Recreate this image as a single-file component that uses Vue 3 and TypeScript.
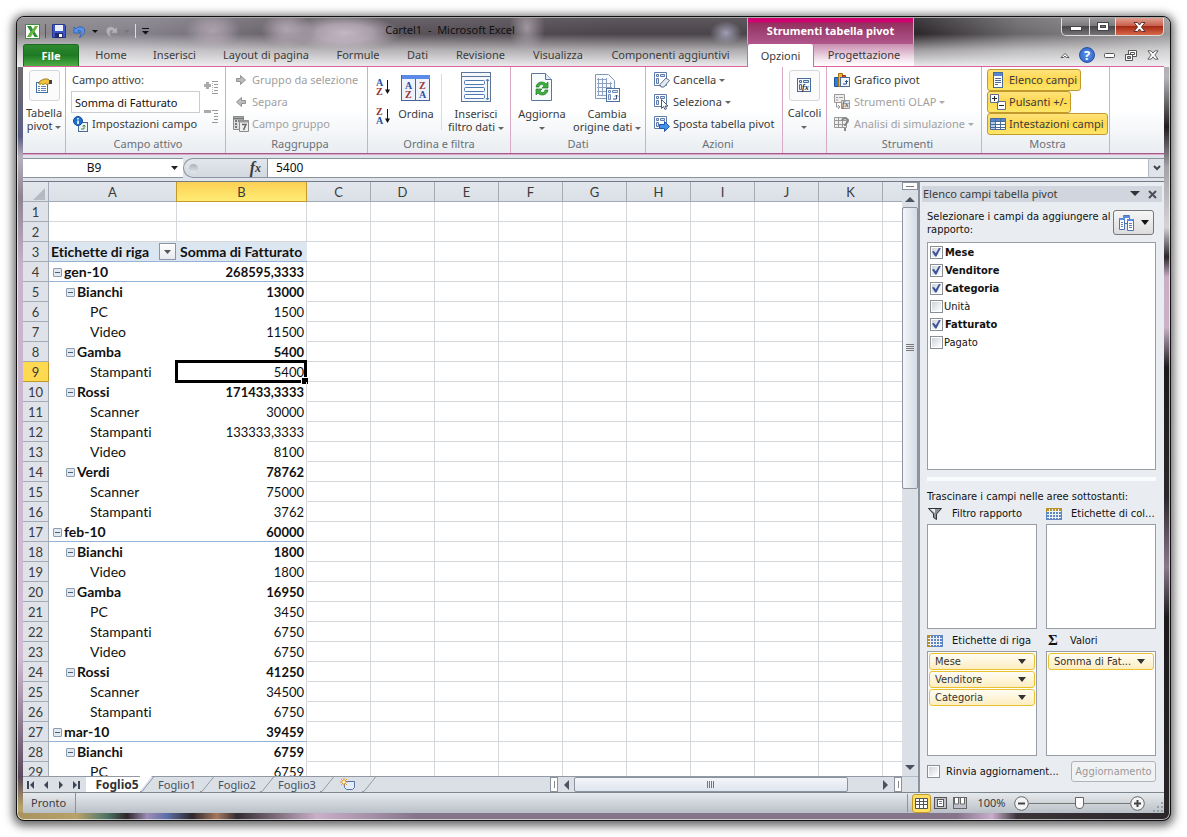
<script setup lang="ts">
import { ref } from 'vue'

interface Tab { name: string; width: number }
interface Row { label: string; value: string; level: number }

const tabs: Tab[] = [
  { name: 'Home', width: 58 },
  { name: 'Inserisci', width: 69 },
  { name: 'Layout di pagina', width: 114 },
  { name: 'Formule', width: 70 },
  { name: 'Dati', width: 49 },
  { name: 'Revisione', width: 77 },
  { name: 'Visualizza', width: 78 },
  { name: 'Componenti aggiuntivi', width: 147 },
]

const columns: string[] = ['A', 'B', 'C', 'D', 'E', 'F', 'G', 'H', 'I', 'J', 'K', '']
const emptyColumns = columns.slice(2)

const rows: Row[] = [
  { label: 'gen-10', value: '268595,3333', level: 0 },
  { label: 'Bianchi', value: '13000', level: 1 },
  { label: 'PC', value: '1500', level: 2 },
  { label: 'Video', value: '11500', level: 2 },
  { label: 'Gamba', value: '5400', level: 1 },
  { label: 'Stampanti', value: '5400', level: 2 },
  { label: 'Rossi', value: '171433,3333', level: 1 },
  { label: 'Scanner', value: '30000', level: 2 },
  { label: 'Stampanti', value: '133333,3333', level: 2 },
  { label: 'Video', value: '8100', level: 2 },
  { label: 'Verdi', value: '78762', level: 1 },
  { label: 'Scanner', value: '75000', level: 2 },
  { label: 'Stampanti', value: '3762', level: 2 },
  { label: 'feb-10', value: '60000', level: 0 },
  { label: 'Bianchi', value: '1800', level: 1 },
  { label: 'Video', value: '1800', level: 2 },
  { label: 'Gamba', value: '16950', level: 1 },
  { label: 'PC', value: '3450', level: 2 },
  { label: 'Stampanti', value: '6750', level: 2 },
  { label: 'Video', value: '6750', level: 2 },
  { label: 'Rossi', value: '41250', level: 1 },
  { label: 'Scanner', value: '34500', level: 2 },
  { label: 'Stampanti', value: '6750', level: 2 },
  { label: 'mar-10', value: '39459', level: 0 },
  { label: 'Bianchi', value: '6759', level: 1 },
  { label: 'PC', value: '6759', level: 2 },
]

const activeRow = ref(9)
const activeField = ref('Somma di Fatturato')
const zoomLevel = ref(50)
const fields = ref([
  { name: 'Mese', on: true },
  { name: 'Venditore', on: true },
  { name: 'Categoria', on: true },
  { name: 'Unità', on: false },
  { name: 'Fatturato', on: true },
  { name: 'Pagato', on: false },
])
const rowLabels = ['Mese', 'Venditore', 'Categoria']
const sheets = ['Foglio1', 'Foglio2', 'Foglio3']
</script>

<template>
  <div class="desktop">
    <div class="window">
      <header class="head">
        <div class="qat">
          <svg width="15" height="15" viewBox="0 0 15 15">
            <rect x=".5" y=".5" width="14" height="14" fill="#fff" stroke="#3c8b3e" />
            <path d="M2 2h4l2 3.500 2-3.500h3L9.500 7.500 13 13H9.500L7.500 9.500 5.500 13H2l3.500-5.500z" fill="#2f8f38" />
            <path d="M10 2h3L6 13H2z" fill="#7ac043" opacity=".75" />
          </svg>
          <i class="bar"></i>
          <button aria-label="Salva">
            <svg width="14" height="14" viewBox="0 0 14 14">
              <path d="M.5.5h12l1 1v12H.5z" fill="#3a55c4" stroke="#26348a" />
              <rect x="3" y="1" width="8" height="6" fill="#eaf0fb" />
              <rect x="3" y="9" width="8" height="5" fill="#1f2a66" />
              <rect x="7" y="10" width="3" height="3" fill="#fff" />
            </svg>
          </button>
          <button class="undo" aria-label="Annulla">
            <svg width="13" height="13" viewBox="0 0 13 13">
              <path d="M1 2v6h6L4.800 5.800C7.500 4 9.800 7 6.500 12.500 13 9.500 13.500 2 7 1.800 5.500 1.800 4 2.600 3 3.900z" fill="#5b93ea" stroke="#2b5db0" stroke-width=".8" />
            </svg>
            <i class="caret dark"></i>
          </button>
          <button class="redo" aria-label="Ripeti">
            <svg width="13" height="13" viewBox="0 0 13 13">
              <path d="M12 2v6H6l2.200-2.200C5.500 4 3.200 7 6.500 12.500 0 9.500-.500 2 6 1.800c1.500 0 3 .800 4 2.100z" fill="#b5b3b7" stroke="#9b999d" stroke-width=".6" />
            </svg>
            <i class="caret"></i>
          </button>
          <i class="bar light"></i>
          <button aria-label="Personalizza barra di accesso rapido">
            <svg width="7" height="8" viewBox="0 0 7 8"><path d="M0 1.500h7" stroke="#111" /><path d="M0 4h7L3.500 7.500z" fill="#111" /></svg>
          </button>
          <span class="doc">Cartel1&nbsp; -&nbsp; Microsoft Excel</span>
        </div>
        <div class="ctx-title">Strumenti tabella pivot</div>
        <div class="sys">
          <button class="min" aria-label="Riduci a icona"><svg width="12" height="5"><rect x=".5" y=".5" width="11" height="4" fill="#fff" stroke="#444" /></svg></button>
          <button class="max" aria-label="Ingrandisci"><svg width="12" height="9"><rect x=".5" y=".5" width="11" height="8" fill="#fff" stroke="#444" /><rect x="3.500" y="3.500" width="5" height="2" fill="#777" stroke="#444" /></svg></button>
          <button class="close" aria-label="Chiudi"><svg width="13" height="10" viewBox="0 0 13 10"><path d="M1 .500h3.500l2 2.500 2-2.500H12L8.500 5l3.500 4.500H8.500l-2-2.500-2 2.500H1L4.500 5z" fill="#fff" stroke="#5d3030" /></svg></button>
        </div>
        <nav class="tabs">
          <button class="file">File</button>
          <button v-for="t in tabs" :key="t.name" :style="{ width: t.width + 'px' }">{{ t.name }}</button>
        </nav>
        <nav class="ctx-tabs">
          <button class="current">Opzioni</button>
          <button>Progettazione</button>
        </nav>
        <div class="mdi">
          <button aria-label="Riduci barra multifunzione"><svg width="10" height="7"><path d="M1 5.500 5 1.500l4 4H6.500L5 4.200 3.500 5.500z" fill="#fff" stroke="#555" /></svg></button>
          <button class="help" aria-label="Guida">?</button>
          <button aria-label="Riduci"><svg width="11" height="5"><rect x=".5" y=".5" width="10" height="4" rx="1" fill="#fff" stroke="#555" /></svg></button>
          <button aria-label="Ripristina"><svg width="12" height="11"><path d="M3.500.500h8v6h-8z" fill="#fff" stroke="#555" /><path d="M5.500 2.500h4v2h-4z" fill="none" stroke="#555" /><path d="M.500 4.500h7v6h-7z" fill="#fff" stroke="#555" /><path d="M2.500 6.500h3v2h-3z" fill="#aaa" stroke="#555" /></svg></button>
          <button aria-label="Chiudi cartella"><svg width="12" height="10" viewBox="0 0 13 10"><path d="M1 .500h3.500l2 2.500 2-2.500H12L8.500 5l3.500 4.500H8.500l-2-2.500-2 2.500H1L4.500 5z" fill="#fff" stroke="#555" /></svg></button>
        </div>
      </header>

      <section class="ribbon">
        <div class="group g-pivot">
          <button class="tall">
            <span class="frame">
              <svg width="16" height="15" viewBox="0 0 16 15">
                <rect x=".5" y="4.500" width="11" height="10" fill="#fff" stroke="#3d6ea5" />
                <path d="M2 8.500h2M5 8.500h5M2 10.500h2M5 10.500h5M2 12.500h2M5 12.500h5" stroke="#5f86b8" />
                <path d="M2.500 5.500 4 3l4-2h4l1.500 1.500v3L11 6.500 9 5.500 7 7 5.500 5.500 4 6.500z" fill="#f0c33c" stroke="#8a6a18" stroke-width=".8" />
                <path d="M13 2h3v4h-3z" fill="#444" />
              </svg>
            </span>
            <span>Tabella<br>pivot <i class="caret"></i></span>
          </button>
        </div>

        <div class="group g-field">
          <div class="cols">
            <div class="stack">
              <label class="item lab" for="active-field">Campo attivo:</label>
              <input id="active-field" v-model="activeField" class="field">
              <button class="item info">
                <svg width="16" height="16" viewBox="0 0 16 16">
                  <rect x="5.500" y="6.500" width="9" height="9" fill="#eef4fb" stroke="#4a6b96" />
                  <path d="M8 13h3V9m-1.500 1.500L11 9l1.500 1.500" fill="none" stroke="#3c8e34" />
                  <circle cx="5" cy="5" r="4.500" fill="#1f6fd0" stroke="#134a95" /><path d="M4.200 2h1.600v1.500H4.200zM4.200 4.500h1.600V8H4.200z" fill="#fff" />
                </svg>
                Impostazioni campo
              </button>
            </div>
            <div class="expand">
              <button disabled aria-label="Espandi intero campo"><svg width="16" height="14" viewBox="0 0 16 14"><path d="M3 2h3v2h2v3H6v2H3V7H1V4h2z" fill="#aaa" /><path d="M9 1.500h6M11 4.500h4M11 7.500h4M11 10.500h4M9 13.500h6" stroke="#999" /><path d="M9.500 3v9" stroke="#bbb" stroke-dasharray="1 1" /></svg></button>
              <button disabled aria-label="Comprimi intero campo"><svg width="16" height="14" viewBox="0 0 16 14"><path d="M1 1h7v3H1z" fill="#aaa" /><path d="M9 1.500h6M11 4.500h4M11 7.500h4M11 10.500h4M9 13.500h6" stroke="#999" /></svg></button>
            </div>
          </div>
          <h2>Campo attivo</h2>
        </div>

        <div class="group g-group">
          <div class="stack">
            <button class="item" disabled><svg width="16" height="12" viewBox="0 0 16 12"><path d="M3.500 4.500h4v-3l5 4.500-5 4.500v-3h-4z" fill="#bbb" stroke="#929292" /></svg>Gruppo da selezione</button>
            <button class="item" disabled><svg width="16" height="12" viewBox="0 0 16 12"><path d="M12.500 4.500h-4v-3L3.500 6l5 4.500v-3h4z" fill="#bbb" stroke="#929292" /></svg>Separa</button>
            <button class="item" disabled><svg width="16" height="16" viewBox="0 0 16 16"><path d="M.500.500h10v13H.500z" fill="#ddd" stroke="#8a8a8a" /><path d="M.500 2.500h10M2 5h2M2 8h2M2 11h2M5 5h1" stroke="#777" stroke-width="2" /><path d="M6.500 4.500h9v11h-9z" fill="#eee" stroke="#8a8a8a" /><path d="M6.500 5.500h9" stroke="#999" stroke-width="2" /><path d="M9 8.500h4L10.500 14" fill="none" stroke="#666" stroke-width="1.500" /></svg>Campo gruppo</button>
          </div>
          <h2>Raggruppa</h2>
        </div>

        <div class="group g-sort">
          <div class="cols">
            <div class="sorts">
              <button aria-label="Ordina dalla A alla Z"><svg width="17" height="18" viewBox="0 0 17 18"><text class="az" x="1" y="8" fill="#2c4f9e">A</text><text class="az" x="1" y="17" fill="#963232">Z</text><path d="M12.500 2v11" stroke="#111" /><path d="M10 11.500h5L12.500 16z" fill="#111" /></svg></button>
              <button aria-label="Ordina dalla Z alla A"><svg width="17" height="18" viewBox="0 0 17 18"><text class="az" x="1" y="8" fill="#963232">Z</text><text class="az" x="1" y="17" fill="#2c4f9e">A</text><path d="M12.500 2v11" stroke="#111" /><path d="M10 11.500h5L12.500 16z" fill="#111" /></svg></button>
            </div>
            <button class="big order">
              <svg width="30" height="30" viewBox="0 0 30 30"><rect x=".5" y="3.500" width="28" height="25" fill="#eef3fb" stroke="#48659b" /><rect x="1" y="3" width="28" height="4" fill="#5b8be6" /><path d="M14.500 7v21" stroke="#48659b" /><text class="az" x="4" y="17" fill="#2c4f9e">A</text><text class="az" x="4" y="26" fill="#963232">Z</text><text class="az" x="18" y="17" fill="#963232">Z</text><text class="az" x="18" y="26" fill="#2c4f9e">A</text></svg>
              <span>Ordina</span>
            </button>
            <i class="thin"></i>
            <button class="big filter">
              <svg width="30" height="30" viewBox="0 0 30 30"><rect x=".5" y=".5" width="29" height="29" fill="#f4f8fc" stroke="#5c7699" /><path d="M1 4.500h28" stroke="#5c7699" /><g fill="#fff" stroke="#4f79b5"><rect x="3.500" y="8.500" width="20" height="4" rx="1" /><rect x="3.500" y="15.500" width="20" height="4" rx="1" /><rect x="3.500" y="22.500" width="20" height="4" rx="1" /></g><path d="M26.500 8v19M25 9l1.500-2L28 9M25 26l1.500 2 1.500-2" fill="none" stroke="#4f79b5" /></svg>
              <span>Inserisci<br>filtro dati <i class="caret"></i></span>
            </button>
          </div>
          <h2>Ordina e filtra</h2>
        </div>

        <div class="group g-data">
          <div class="cols">
            <button class="big refresh">
              <svg width="24" height="30" viewBox="0 0 24 30"><path d="M1.500 1.500h14l6 6v21h-20z" fill="#f7fafe" stroke="#5c7699" /><path d="M15.500 1.500v6h6" fill="#dfe9f5" stroke="#5c7699" /><path d="M6 15c1-6 8-6 10-3l2-2v6h-6l2-2c-1-2-5-2-5 1z" fill="#3fae3d" stroke="#1e7a25" stroke-width=".7" /><path d="M18 18c-1 6-8 6-10 3l-2 2v-6h6l-2 2c1 2 5 2 5-1z" fill="#3fae3d" stroke="#1e7a25" stroke-width=".7" /></svg>
              <span>Aggiorna<br><i class="caret"></i></span>
            </button>
            <button class="big source">
              <svg width="28" height="30" viewBox="0 0 28 30"><path d="M2.500 2.500h13l6 6v18h-19z" fill="#f7fafe" stroke="#8198b5" /><path d="M5.500 6v17.500M9.500 6v17.500M13.500 6v17.500M17.500 10v13.500M4 7.500h10M4 11.500h15M4 15.500h15M4 19.500h15M4 23.500h15" stroke="#8fa3c0" /><rect x="13.500" y="16.500" width="13" height="13" fill="#fff" stroke="#4f6f9e" /><path d="M15.500 18.500h2v2h-2zM19.500 18.500h5v2h-5zM15.500 22.500h2v5h-2z" fill="#dce8f6" stroke="#6f8db8" /><path d="M20 27h3.500v-4m-1.500 1.500 1.500-1.500 1.500 1.500" fill="none" stroke="#2e4f86" /></svg>
              <span>Cambia<br>origine dati <i class="caret"></i></span>
            </button>
          </div>
          <h2>Dati</h2>
        </div>

        <div class="group g-actions">
          <div class="stack">
            <button class="item"><svg width="16" height="16" viewBox="0 0 16 16"><path d="M.500.500h12v13H.500z" fill="#fff" stroke="#5d7ba8" /><path d="M2.500 2.500h2v2h-2zM6.500 2.500h4v2h-4zM2.500 6.500h2v5h-2z" fill="#dce8f6" stroke="#5d7ba8" /><path d="M6 12.500 12 6l3.500 2.500-5.500 6.500H7z" fill="#e5eaf1" stroke="#5a6f8f" /></svg>Cancella <i class="caret"></i></button>
            <button class="item"><svg width="16" height="16" viewBox="0 0 16 16"><path d="M.500.500h12v12H.500z" fill="#fff" stroke="#5d7ba8" /><path d="M2.500 2.500h2v2h-2zM6.500 2.500h4v2h-4zM2.500 6.500h2v4h-2z" fill="#dce8f6" stroke="#5d7ba8" /><path d="M7.500 5.500v9l2-2 1.500 3 1.500-.800-1.400-2.700h2.900z" fill="#fff" stroke="#4a5c78" /></svg>Seleziona <i class="caret"></i></button>
            <button class="item"><svg width="16" height="16" viewBox="0 0 16 16"><path d="M.500.500h12v12H.500z" fill="#fff" stroke="#5d7ba8" /><path d="M2.500 2.500h2v2h-2zM6.500 2.500h4v2h-4zM2.500 6.500h2v4h-2z" fill="#dce8f6" stroke="#5d7ba8" /><path d="M5.500 8.500h5v-3l5 5-5 5v-3h-5z" fill="#4590ea" stroke="#1e58b0" /></svg>Sposta tabella pivot</button>
          </div>
          <h2>Azioni</h2>
        </div>

        <div class="group g-calc">
          <button class="tall">
            <span class="frame"><svg width="15" height="15" viewBox="0 0 15 15"><rect x=".5" y=".5" width="13" height="13" fill="#f4f8fd" stroke="#4a6b96" /><path d="M2.500 2.500h2v2h-2zM6.500 2.500h5v2h-5zM2.500 6.500h2v5h-2z" fill="#dce8f6" stroke="#4a6b96" /><text class="fx" x="5" y="12" fill="#223">fx</text></svg></span>
            <span>Calcoli<br><i class="caret"></i></span>
          </button>
        </div>

        <div class="group g-tools">
          <div class="stack">
            <button class="item"><svg width="17" height="16" viewBox="0 0 17 16"><path d="M.500 5.500h4v9h-4z" fill="#2f7fd6" stroke="#1c549b" /><path d="M4.500 1.500h4v13h-4z" fill="#f2b632" stroke="#a7700f" /><path d="M8.500 3.500h3v10h-3z" fill="#d9542b" stroke="#96330f" /><rect x="6.500" y="5.500" width="9" height="9" fill="#f2f6fc" stroke="#4a6b96" /><path d="M9 12h3.500V8.500M11 10l1.500-1.500L14 10" fill="none" stroke="#2e4f86" /></svg>Grafico pivot</button>
            <button class="item" disabled><svg width="17" height="16" viewBox="0 0 17 16"><path d="M.500.500h10v8H.500z" fill="#eee" stroke="#999" /><path d="M2 3.500h2M5 3.500h4M2 6h2" stroke="#999" /><path d="M2.500 9v4h3M4 11l2 2-2 2" fill="none" stroke="#999" /><path d="M7.500 6.500h8v8h-8z" fill="#e3e3e3" stroke="#999" /><text class="fx" x="8" y="13" fill="#666">fx</text></svg>Strumenti OLAP <i class="caret"></i></button>
            <button class="item" disabled><svg width="17" height="16" viewBox="0 0 17 16"><path d="M.500 1.500h12v10H.500zM.500 4.500h12M.500 8.500h12M4.500 1.500v10M8.500 1.500v10" fill="#eee" stroke="#999" /><path d="M8 5c0-4 7-3 6 0 0 2-3 2-3 5M11 12v3" fill="none" stroke="#888" stroke-width="2" /></svg>Analisi di simulazione <i class="caret"></i></button>
          </div>
          <h2>Strumenti</h2>
        </div>

        <div class="group g-show">
          <div class="stack toggles">
            <button class="item on"><svg width="16" height="16" viewBox="0 0 16 16"><rect x="3.500" y=".5" width="9" height="15" fill="#fff" stroke="#4a6b96" /><rect x="4" y="1" width="8" height="3" fill="#5487cf" /><path d="M5 6.500h6M5 8.500h6M5 10.500h6M5 12.500h3" stroke="#4a6b96" /></svg>Elenco campi</button>
            <button class="item on"><svg width="16" height="16" viewBox="0 0 16 16"><path d="M.500.500h8v8h-8zM7.500 7.500h8v8h-8z" fill="#fff" stroke="#5d6f8d" /><path d="M2 4.500h5M4.500 2v5M9 11.500h5" stroke="#223" /></svg>Pulsanti +/-</button>
            <button class="item on"><svg width="16" height="16" viewBox="0 0 16 16"><path d="M.500 2.500h15v11H.500z" fill="#fff" stroke="#4a6b96" /><rect x="1" y="3" width="14" height="2" fill="#5487cf" /><rect x="1" y="5" width="4" height="8" fill="#b4cdec" /><path d="M5.500 3v10M10.500 3v10M1 5.500h14M1 8.500h14M1 11.500h14" stroke="#4a6b96" /></svg>Intestazioni campi</button>
          </div>
          <h2>Mostra</h2>
        </div>
      </section>

      <div class="formula">
        <input class="name" value="B9" aria-label="Casella nome">
        <button class="drop" aria-label="Elenco nomi"><svg width="7" height="4"><path d="M0 0h7L3.500 4z" fill="#222" /></svg></button>
        <div class="fxbox"><i class="knob"></i><button aria-label="Inserisci funzione"><em>f</em><em class="x">x</em></button></div>
        <input class="expr" value="5400" aria-label="Barra della formula">
        <button class="more" aria-label="Espandi barra della formula"><svg width="8" height="6"><path d="m1 1 3 3 3-3" fill="none" stroke="#444" stroke-width="2" /></svg></button>
      </div>

      <main class="work">
        <div class="sheet">
          <div class="grid">
            <table>
              <colgroup>
                <col class="c-head"><col class="c-a"><col class="c-b"><col v-for="c in emptyColumns" :key="c" class="c-n">
              </colgroup>
              <thead>
                <tr>
                  <th class="corner"><svg width="12" height="12"><path d="M12 0v12H0z" fill="#b4bac3" /></svg></th>
                  <th v-for="c in columns" :key="c" :class="{ hot: c === 'B' }">{{ c }}</th>
                </tr>
              </thead>
              <tbody>
                <tr v-for="n in 2" :key="n"><th>{{ n }}</th><td v-for="c in columns" :key="c"></td></tr>
                <tr class="titles">
                  <th>3</th>
                  <td><span class="with-drop">Etichette di riga<button aria-label="Filtra etichette di riga"><svg width="7" height="4"><path d="M0 0h7L3.500 4z" fill="#555" /></svg></button></span></td>
                  <td>Somma di Fatturato</td>
                  <td v-for="c in emptyColumns" :key="c"></td>
                </tr>
                <tr v-for="(r, i) in rows" :key="i" :class="'lv' + r.level">
                  <th :class="{ hot: i + 4 === activeRow }">{{ i + 4 }}</th>
                  <td class="lbl"><button v-if="r.level < 2" class="fold" aria-label="Comprimi"></button>{{ r.label }}</td>
                  <td class="num">{{ r.value }}<i v-if="i + 4 === activeRow" class="cursor"></i></td>
                  <td v-for="c in emptyColumns" :key="c"></td>
                </tr>
              </tbody>
            </table>
          </div>
          <div class="bottom">
            <div class="sheet-tabs">
              <button class="nav" aria-label="Primo foglio"><svg width="8" height="8"><path d="M1 0v8" stroke="#3c4654" stroke-width="2" /><path d="M7 0v8L3 4z" fill="#3c4654" /></svg></button>
              <button class="nav" aria-label="Foglio precedente"><svg width="8" height="8"><path d="M6 0v8L2 4z" fill="#3c4654" /></svg></button>
              <button class="nav" aria-label="Foglio successivo"><svg width="8" height="8"><path d="M2 0v8l4-4z" fill="#3c4654" /></svg></button>
              <button class="nav" aria-label="Ultimo foglio"><svg width="8" height="8"><path d="M1 0v8l4-4z" fill="#3c4654" /><path d="M7 0v8" stroke="#3c4654" stroke-width="2" /></svg></button>
              <button class="leaf front">Foglio5</button>
              <svg class="slant" width="14" height="16"><path d="M0 0h12L0 15z" fill="#fff" /><path d="M0 15.500h2l12-15" fill="none" stroke="#9299a5" /></svg>
              <template v-for="s in sheets" :key="s">
                <button class="leaf">{{ s }}</button>
                <svg class="slant" width="14" height="16"><path d="M0 15.500h2l12-15" fill="none" stroke="#9299a5" /></svg>
              </template>
              <button class="leaf new" aria-label="Inserisci foglio di lavoro"><svg width="16" height="13" viewBox="0 0 16 13"><path d="M4.500 3.500h10v6l-2 2h-6l-2-2z" fill="#e4ecf9" stroke="#5672a8" /><path d="M4 0v8M0 4h8M1 1l6 6M7 1 1 7" stroke="#e8952a" /><circle cx="4" cy="4" r="1.500" fill="#fff3b0" /></svg></button>
              <svg class="slant" width="14" height="16"><path d="M0 15.500h2l12-15" fill="none" stroke="#9299a5" /></svg>
            </div>
            <div class="hscroll">
              <i class="split"></i>
              <button aria-label="Scorri a sinistra"><svg width="6" height="10"><path d="M6 0v10L1 5z" fill="#4b5360" /></svg></button>
              <div class="htrack"><i class="hthumb"></i></div>
              <button aria-label="Scorri a destra"><svg width="6" height="10"><path d="M0 0v10l5-5z" fill="#4b5360" /></svg></button>
              <i class="split"></i>
            </div>
          </div>
        </div>
        <div class="vscroll">
          <i class="vsplit"></i>
          <button aria-label="Scorri in alto"><svg width="10" height="6"><path d="M0 6h10L5 1z" fill="#4b5360" /></svg></button>
          <div class="vtrack"><i class="vthumb"></i></div>
          <button aria-label="Scorri in basso"><svg width="10" height="6"><path d="M0 0h10L5 5z" fill="#4b5360" /></svg></button>
          <i class="vend"></i>
        </div>

        <aside class="pane">
          <h3>Elenco campi tabella pivot
            <span>
              <button aria-label="Opzioni riquadro"><svg width="10" height="6"><path d="M0 0h10L5 5z" fill="#333" /></svg></button>
              <button aria-label="Chiudi riquadro"><svg width="9" height="9"><path d="m1 1 7 7M8 1 1 8" stroke="#4a4f58" stroke-width="2" /></svg></button>
            </span>
          </h3>
          <div class="pbody">
            <div class="intro">
              <p>Selezionare i campi da aggiungere al rapporto:</p>
              <button class="layout" aria-label="Disposizione"><svg width="16" height="16" viewBox="0 0 16 16"><g fill="#fff" stroke="#4f74b3"><path d="M4.500.500h6v8h-6z" /><path d="M.500 3.500h5v11h-5zM8.500 4.500h6v11h-6z" /></g><path d="M4 1h7v2H4zM0 3h6v2H0zM8 4h7v2H8z" fill="#5a8be0" /><path d="M2 7.500h2M2 9.500h2M2 11.500h2M10 8.500h3M10 10.500h3M10 12.500h3" stroke="#5f7fb4" /></svg><svg width="8" height="5"><path d="M0 0h8L4 5z" fill="#111" /></svg></button>
            </div>
            <div class="list">
              <label v-for="f in fields" :key="f.name" :class="{ bold: f.on }"><input v-model="f.on" type="checkbox">{{ f.name }}</label>
            </div>
            <hr>
            <p class="drag">Trascinare i campi nelle aree sottostanti:</p>
            <div class="areas">
              <section>
                <h4><svg width="17" height="14" viewBox="0 0 17 14"><path d="M1.500 1.500h13L9.500 7v5.500l-3-2V7z" fill="#8d9298" stroke="#333" /><path d="M3 2h5v4z" fill="#eee" /></svg>Filtro rapporto</h4>
                <div class="drop-area"></div>
              </section>
              <section>
                <h4><svg width="17" height="14" viewBox="0 0 17 14"><rect x="0" y="1" width="16" height="12" fill="#5f86c0" /><rect x="0" y="1" width="16" height="4" fill="#b8912c" /><path d="M1 4.500h14M1 7.500h14M1 10.500h14M3.500 2v10M6.500 2v10M9.500 2v10M12.500 2v10" stroke="#eef3fa" /></svg>Etichette di col...</h4>
                <div class="drop-area"></div>
              </section>
              <section>
                <h4><svg width="17" height="14" viewBox="0 0 17 14"><rect x="0" y="1" width="16" height="12" fill="#5f86c0" /><rect x="0" y="1" width="4" height="12" fill="#b8912c" /><path d="M1 4.500h14M1 7.500h14M1 10.500h14M3.500 2v10M6.500 2v10M9.500 2v10M12.500 2v10" stroke="#eef3fa" /></svg>Etichette di riga</h4>
                <div class="drop-area"><button v-for="l in rowLabels" :key="l">{{ l }}<svg width="8" height="5"><path d="M0 0h8L4 5z" fill="#333" /></svg></button></div>
              </section>
              <section>
                <h4><b>Σ</b>Valori</h4>
                <div class="drop-area"><button>Somma di Fat...<svg width="8" height="5"><path d="M0 0h8L4 5z" fill="#333" /></svg></button></div>
              </section>
            </div>
            <div class="update">
              <label><input type="checkbox">Rinvia aggiornament...</label>
              <button disabled>Aggiornamento</button>
            </div>
          </div>
        </aside>
      </main>

      <footer class="status">
        <span class="ready">Pronto</span>
        <i class="fill"></i>
        <button class="view on" aria-label="Normale"><svg width="13" height="11"><path d="M.500.500h12v10H.500zM.500 3.500h12M.500 6.500h12M4.500.500v10M8.500.500v10" fill="#fff" stroke="#555" /></svg></button>
        <button class="view" aria-label="Layout di pagina"><svg width="13" height="12"><rect x=".5" y=".5" width="12" height="11" fill="#bfc3c9" stroke="#555" /><rect x="3.500" y="2.500" width="6" height="7" fill="#fff" stroke="#555" /><path d="M5 4.500h3M5 6.500h3" stroke="#777" /></svg></button>
        <button class="view" aria-label="Anteprima interruzioni"><svg width="14" height="12"><rect x=".5" y=".5" width="13" height="11" fill="#bfc3c9" stroke="#666" /><path d="M1.500 1v6h4V1M7.500 1v6h4V1" fill="#fff" stroke="#666" /></svg></button>
        <span class="pct">100%</span>
        <button class="round" aria-label="Zoom indietro"><svg width="15" height="15"><circle cx="7.500" cy="7.500" r="6.800" fill="#f3f4f6" stroke="#666" /><path d="M4 7.500h7" stroke="#444" stroke-width="2" /></svg></button>
        <input v-model="zoomLevel" type="range" min="0" max="100" aria-label="Zoom">
        <button class="round" aria-label="Zoom avanti"><svg width="15" height="15"><circle cx="7.500" cy="7.500" r="6.800" fill="#f3f4f6" stroke="#666" /><path d="M4 7.500h7M7.500 4v7" stroke="#444" stroke-width="2" /></svg></button>
        <svg class="grip" width="12" height="12"><path d="M9 1h2v2H9zM9 5h2v2H9zM9 9h2v2H9zM5 5h2v2H5zM5 9h2v2H5zM1 9h2v2H1z" fill="#9a9fa7" /></svg>
      </footer>
    </div>
  </div>
</template>

<style>
body { margin: 0; background: #fff; }
</style>

<style scoped>
* { box-sizing: border-box; }
button, input { font: inherit; color: inherit; margin: 0; padding: 0; border: 0; background: none; border-radius: 0; outline: 0; }
button { display: flex; align-items: center; justify-content: center; white-space: nowrap; flex: none; }
svg { flex: none; display: block; }
h2, h3, h4, p { margin: 0; font-weight: 400; font-size: 11px; }

.desktop {
  height: 100vh;
  min-height: 600px;
  padding: 16px;
  font: 11px/14px "Noto Sans", "Open Sans", sans-serif;
  color: #3b3b3b;
  display: flex;
}
.window {
  flex: 1;
  min-width: 0;
  display: flex;
  flex-direction: column;
  padding: 0 6px 7px;
  border: 1px solid #111;
  border-radius: 8px;
  overflow: hidden;
  background:
    linear-gradient(90deg, #a8935f 0, #b7a26c 60px, #4d7466 90px, #2c2529 110px, #9d8cb4 130px, #5d6fa8 150px, #2c2529 175px, #a5795f 200px, #332b30 220px, #c9b0c8 300px, #85758a 400px, #85758a 940px, #c8aecb 975px, #3a3338 1000px, #2a262a 100%) bottom / 100% 8px no-repeat,
    linear-gradient(180deg, #6c686c 0, #6c686c 60px, #5b5f86 120px, #b9b0bd 140px, #8c8490 180px, #c9b3cc 250px, #d2bbd3 640px, #5a4a5c 760px, #b7a26c 790px) left / 8px 100% no-repeat,
    linear-gradient(180deg, #8a868a 0, #b9b6bb 60px, #1f1b1f 110px, #a6a3a8 150px, #d6d3d8 210px, #2a252a 240px, #c9adc5 260px, #cbb2c8 310px, #1d1a1e 350px, #2b272b 480px, #8a7a8c 550px, #1d1a1e 600px, #2a262a 100%) right / 8px 100% no-repeat,
    #6c686c;
  box-shadow: inset 0 0 0 1px rgba(255, 255, 255, .65), 0 2px 10px 3px rgba(0, 0, 0, .6);
}

.caret {
  display: inline-block;
  flex: none;
  width: 0;
  height: 0;
  border: 3px solid transparent;
  border-top-color: #666;
  border-bottom: 0;
  vertical-align: middle;
}
.caret.dark { border-top-color: #111; }

/* title bar and tabs */
.head {
  display: grid;
  grid-template: 26px 23px / auto 167px 1fr;
  margin: 0 -6px;
  padding: 0 6px;
  flex: none;
  background:
    radial-gradient(ellipse 28px 18px at 196px 13px, rgba(205, 190, 206, .6), rgba(205, 190, 206, .4) 45%, transparent),
    radial-gradient(ellipse 26px 18px at 270px 12px, rgba(205, 190, 206, .7), rgba(205, 190, 206, .5) 40%, transparent),
    radial-gradient(ellipse 56px 18px at 328px 15px, rgba(215, 200, 216, .85), rgba(215, 200, 216, .6) 50%, transparent),
    radial-gradient(ellipse 18px 26px at 510px 10px, rgba(190, 180, 190, .7), transparent),
    radial-gradient(ellipse 16px 12px at 709px 15px, rgba(180, 180, 205, .8), transparent),
    linear-gradient(180deg, rgba(255, 255, 255, .1), transparent 16px, rgba(255, 255, 255, .55) 32px, #f2f1f3 50px),
    linear-gradient(90deg, #8b888b 0, #85818a 120px, #6a646b 260px, #5a545a 370px, #4b454b 600px, #4a454a 730px, #2b272b 900px, #6b686b 1000px, #9a989b 100%);
  border-top: 1px solid #aaa;
}
.qat { display: flex; align-items: center; padding-left: 2px; gap: 4px; }
.qat button { gap: 4px; }
.qat > button { margin-left: 3px; }
.undo .caret, .redo .caret { margin-left: 2px; }
.bar { width: 1px; height: 14px; background: #555; margin-left: 1px; }
.bar.light { background: #ddd; }
.qat > .bar + button { margin-left: 2px; }
.redo .caret { border-top-color: #777; }
.doc { flex: 1; text-align: center; color: #111; padding-bottom: 2px; }
.ctx-title {
  background: linear-gradient(180deg, #d0006f 0, #d0006f 4px, #93305f 5px, #b0578c 100%);
  color: #fff;
  font-weight: 700;
  line-height: 26px;
  text-align: center;
  border: solid #d9a4c4;
  border-width: 0 1px;
}
.sys { display: flex; justify-content: flex-end; align-items: flex-start; }
.sys button { height: 18px; border: 1px solid #ddd; border-top: 0; background: linear-gradient(#9c999c 0, #7c797c 45%, #4a474a 50%, #777477 100%); }
.sys .min { width: 29px; border-radius: 0 0 0 5px; align-items: flex-end; padding-bottom: 4px; }
.sys .max { width: 26px; border-left: 0; }
.sys .close { width: 48px; border-left: 0; border-radius: 0 0 5px 0; background: linear-gradient(#e0a090 0, #c8604c 45%, #a52a14 50%, #d8694a 100%); }
.tabs, .ctx-tabs, .mdi { display: flex; }
.tabs { border-bottom: 1px solid #e0609f; padding-right: 3px; }
.tabs .file {
  width: 56px;
  margin-right: 3px;
  color: #fff;
  font-weight: 700;
  border-radius: 3px 3px 0 0;
  background: linear-gradient(#2d8a2f 0, #1f7a24 50%, #4fae45 100%);
  border: 1px solid #1b6a20;
  border-bottom: 0;
}
.ctx-tabs { background: linear-gradient(#c98db0 0, #f4e6ef 70%, #fff 100%); border: 1px solid #e0609f; border-width: 0 0 1px 1px; }
.ctx-tabs button { flex: 1; }
.ctx-tabs .current { flex: 0 0 66px; margin-bottom: -1px; background: #fff; border: 1px solid #e0609f; border-width: 0 1px 0 0; border-radius: 3px 3px 0 0; }
.mdi { justify-content: flex-end; align-items: center; gap: 10px; padding-right: 5px; border-bottom: 1px solid #e0609f; }
.mdi .help { width: 16px; height: 16px; border-radius: 8px; background: radial-gradient(#5c95ea, #2a5fc4); color: #fff; font-weight: 700; font-size: 13px; border: 1px solid #2450a5; margin: 0 -1px; }

/* ribbon */
.ribbon {
  flex: none;
  display: flex;
  height: 87px;
  background: linear-gradient(#fff 0, #fff 50%, #e9edf1 100%);
  border-bottom: 1px solid #a8598a;
}
.group { flex: none; border-right: 1px solid #dba8c6; display: flex; flex-direction: column; padding-top: 2px; }
.group h2 { text-align: center; color: #6a7079; line-height: 16px; margin-top: auto; padding-bottom: 1px; }
.g-pivot { width: 43px; }
.g-field { width: 160px; padding-left: 5px; }
.g-group { width: 142px; padding-left: 7px; }
.g-sort { width: 143px; }
.g-data { width: 135px; }
.g-actions { width: 137px; padding-left: 8px; }
.g-calc { width: 44px; }
.g-tools { width: 155px; padding-left: 7px; }
.g-show { width: 128px; padding-left: 4px; }
.cols { display: flex; }
.stack { display: flex; flex-direction: column; align-items: flex-start; }
.item { height: 22px; display: flex; align-items: center; gap: 3px; white-space: nowrap; }
.item:disabled { color: #a0a0a0; }
.item:disabled .caret { border-top-color: #aaa; }
.lab { padding-left: 1px; }
.info { padding-left: 2px; }
.field { width: 129px; height: 22px; background: #fff; border: 1px solid #c9ccd1; padding-left: 3px; color: #111; }
.expand { display: flex; flex-direction: column; gap: 15px; padding: 11px 0 0 3px; }
.tall { flex-direction: column; padding-top: 1px; line-height: 13px; }
.tall > span:last-child { text-align: center; padding-top: 5px; }
.frame { width: 31px; height: 31px; border: 1px solid #d3d6da; border-radius: 3px; display: flex; align-items: center; justify-content: center; background: #fbfbfc; }
.big { flex-direction: column; justify-content: flex-start; padding-top: 3px; line-height: 13px; text-align: center; }
.big span { padding-top: 5px; }
.az { font: 700 10px "Liberation Serif", serif; }
.fx { font: italic 700 8px "Liberation Serif", serif; }
.sorts { display: flex; flex-direction: column; gap: 11px; padding: 9px 0 0 7px; }
.order { width: 48px; }
.thin { width: 1px; height: 56px; margin: 5px 0 0 1px; background: #d8dbdf; }
.filter { flex: 1; }
.refresh { width: 62px; }
.source { flex: 1; padding-right: 6px; }
.item.on { border: 1px solid #c29a2c; border-radius: 3px; background: linear-gradient(#ffe27a, #ffd84e 50%, #ffe668); padding: 0 3px 0 2px; }
.g-show .item { margin-left: 1px; }

/* formula bar */
.formula { flex: none; display: flex; height: 28px; background: #dfe4ea; padding: 3px 0 3px; border-bottom: 1px solid #747b86; border-top: 1px solid #dca7c8; }
.formula > * { border: solid #8b939f; border-width: 1px 0; }
.name { width: 142px; text-align: center; background: #fff; color: #111; font-size: 12px; }
.drop { width: 18px; background: #fff; }
.fxbox { width: 84px; display: flex; justify-content: space-between; align-items: center; padding: 0 6px 0 5px; background: linear-gradient(#e3e7ec, #d3d9e0); border-left: 1px solid #8b939f; border-radius: 11px 0 0 11px; }
.knob { width: 9px; height: 9px; border-radius: 5px; background: linear-gradient(#a9b0b9, #e6eaee); }
.fxbox em { font: italic 700 16px/16px "Liberation Serif", serif; }
.fxbox .x { font-size: 12px; }
.expr { flex: 1; min-width: 0; background: #fff; border-left: 1px solid #8b939f; padding-left: 8px; font-size: 12px; color: #111; }
.more { width: 16px; border-left: 1px solid #b3bac4; }

/* worksheet */
.work { flex: 1; min-height: 0; display: flex; }
.sheet { flex: 1; min-width: 0; display: flex; flex-direction: column; }
.grid { flex: 1; min-height: 0; overflow: hidden; background: #fff; }
table { table-layout: fixed; width: 922px; border-collapse: separate; border-spacing: 0; font: 13px/17px Lato, sans-serif; font-variant-ligatures: none; color: #111; }
.c-head { width: 26px; }
.c-a { width: 128px; }
.c-b { width: 130px; }
.c-n { width: 64px; }
th, td { height: 20px; padding: 2px 0 0; border: solid #d4d7db; border-width: 0 1px 1px 0; white-space: nowrap; }
th { font-weight: 400; color: #3b3b3b; background: #dfe3e9; border-color: #a3abb6; text-align: center; }
thead th { background: linear-gradient(#e3e7ed, #dbe0e7); }
.corner svg { margin: 2px 0 0 10px; }
th.hot { background: #ffd94f; border-color: #c29a2c; }
thead th.hot { background: linear-gradient(#fbd054, #ffec73); box-shadow: -1px 0 0 #c29a2c; }
.titles td:nth-child(2), .titles td:nth-child(3) { background: #dce6f1; border-color: #95b3d7; border-right-width: 0; font-weight: 700; font-size: 14px; padding: 1px 0 1px 2px; }
.titles td:nth-child(2) { padding-top: 0; padding-bottom: 0; }
.titles td:nth-child(3) { padding-left: 3px; }
.with-drop { display: flex; justify-content: space-between; align-items: center; height: 19px; line-height: 19px; padding-right: 1px; }
.with-drop button { width: 17px; height: 17px; border: 1px solid #8c95a1; background: linear-gradient(#fff, #e5e9ee); }
.lbl, .num { border-color: transparent; }
.lbl { font-size: 14px; padding-top: 1px; padding-bottom: 1px; border-right-width: 0; }
.num { text-align: right; padding-right: 2px; position: relative; border-right-color: #d4d7db; }
.lv0 .lbl, .lv0 .num { border-bottom-color: #95b3d7; }
.lv0 .lbl, .lv0 .num, .lv1 .lbl, .lv1 .num { font-weight: 700; }
.lv0 .lbl { padding-left: 4px; }
.lv1 .lbl { padding-left: 17px; }
.lv2 .lbl { padding-left: 41px; }
.fold { display: inline-block; width: 9px; height: 9px; margin-right: 2px; border: 1px solid #8b9bb0; border-radius: 1px; background: linear-gradient(#4a5d7a, #4a5d7a) center / 5px 1px no-repeat, #e3e9f1; vertical-align: 1px; }
.cursor { position: absolute; inset: -2px -1px -2px -2px; border: 3px solid #000; }
.cursor::after { content: ""; position: absolute; right: -4px; bottom: -4px; width: 6px; height: 6px; background: #000; border: solid #fff; border-width: 1px 0 0 1px; }

.bottom { flex: none; display: flex; height: 16px; background: #dbe0e7; border-top: 1px solid #9299a5; }
.sheet-tabs { flex: 527 1 0; min-width: 0; display: flex; }
.nav { width: 15px; }
.nav:nth-child(4) { margin-right: 3px; }
.leaf { width: 46px; color: #46505e; }
.leaf.front { width: 54px; padding-left: 8px; background: #fff; font-weight: 700; font-size: 12px; color: #333; }
.leaf.new { width: 28px; }
.slant { margin-top: -1px; }
.hscroll { flex: 352 1 0; display: flex; align-items: stretch; }
.hscroll button { width: 16px; }
.split { width: 8px; border: 1px solid #8b939f; background: linear-gradient(#888, #888) center / 1px 7px no-repeat, #fff; }
.htrack { flex: 1; display: flex; }
.hthumb { flex: 0 0 90%; border: 1px solid #8b939f; border-radius: 2px; background: repeating-linear-gradient(90deg, #777 0 1px, transparent 1px 2px) center / 7px 7px no-repeat, linear-gradient(#f2f5fa, #dfe5ee); }
.vscroll { width: 16px; flex: none; display: flex; flex-direction: column; background: #dbe0e7; }
.vscroll button { height: 17px; }
.vsplit { height: 8px; background: linear-gradient(#777, #777) center / 8px 1px no-repeat, #fff; border: 1px solid #8b939f; }
.vtrack { flex: 1; display: flex; flex-direction: column; }
.vthumb { flex: 0 0 51%; border: 1px solid #8b939f; border-radius: 2px; background: repeating-linear-gradient(#777 0 1px, transparent 1px 2px) center / 8px 7px no-repeat, linear-gradient(90deg, #f2f5fa, #d5dbe5); }
.vend { height: 16px; border-top: 1px solid #b3bac4; }

/* field list */
.pane { width: 246px; flex: none; background: #e9edf2; border-left: 2px solid #8b939f; display: flex; flex-direction: column; padding: 4px 2px 0; color: #111; }
.pane h3 { background: #d0d5de; line-height: 16px; color: #3b3b3b; padding: 0 5px 0 1px; display: flex; justify-content: space-between; }
.pane h3 span { display: flex; gap: 8px; }
.pbody { flex: 1; display: flex; flex-direction: column; padding: 8px 6px 10px 5px; font: 11px/13px "DejaVu Sans Condensed", "DejaVu Sans", sans-serif; }
.intro { display: flex; justify-content: space-between; height: 32px; padding-right: 2px; }
.intro p { width: 185px; }
.layout { width: 41px; height: 25px; gap: 6px; border: 1px solid #777; border-radius: 3px; background: linear-gradient(#f6f6f6, #dcdcdc); }
.list { flex: 1; min-height: 110px; background: #fff; border: 1px solid #989da5; padding-left: 2px; }
.list label { display: flex; align-items: center; height: 18px; gap: 1px; }
.list .bold { font-weight: 700; gap: 2px; }
input[type="checkbox"] { appearance: none; width: 13px; height: 13px; flex: none; border: 1px solid #8a8f96; background: linear-gradient(135deg, #cfd3d8, #fff) content-box, #fff; padding: 1px; }
input[type="checkbox"]:checked::before { content: ""; display: block; width: 9px; height: 9px; background: #3d539a; clip-path: polygon(0 45%, 22% 40%, 42% 65%, 80% 0, 100% 0, 50% 100%, 35% 100%); }
.pane hr { flex: none; width: 100%; border: 0; height: 4px; margin: 7px 0 9px; background: #fafbfc; }
.areas { display: grid; grid-template-columns: 1fr 1fr; gap: 3px 9px; }
.areas h4 { display: flex; align-items: center; gap: 8px; height: 19px; white-space: nowrap; padding-bottom: 2px; }
.areas b { width: 16px; font: 700 15px/15px "Liberation Serif", serif; padding-left: 2px; }
.drop-area { height: 105px; background: #fff; border: 1px solid #989da5; padding: 1px; display: flex; flex-direction: column; gap: 1px; }
.drop-area button { justify-content: space-between; height: 17px; border: 1px solid #eac22f; border-radius: 3px; background: linear-gradient(#fffdf4, #fdedc0); padding: 0 8px 0 5px; color: #333; }
.drag { height: 15px; }
.update { display: flex; justify-content: space-between; align-items: center; margin-top: 5px; }
.update label { display: flex; align-items: center; gap: 6px; }
.update button { width: 85px; height: 21px; border: 1px solid #b0b4ba; border-radius: 3px; color: #999; background: #f1f2f4; }

/* status bar */
.status { flex: none; display: flex; align-items: center; height: 21px; border-top: 1px solid #7d858f; background: linear-gradient(#e6e9ec, #b9c0c7); }
.ready { width: 53px; padding-left: 8px; line-height: 20px; border-right: 1px solid #8b939f; }
.fill { flex: 1; border-right: 1px solid #8b939f; height: 18px; }
.view { width: 19px; height: 19px; }
.view.on { margin-left: 4px; border: 1px solid #c29a2c; border-radius: 3px; background: #ffe062; }
.pct { width: 45px; text-align: center; }
.status input[type="range"] { appearance: none; width: 101px; height: 16px; background: linear-gradient(#777, #777) center / 100% 1px no-repeat; }
.status input[type="range"]::-webkit-slider-thumb { appearance: none; width: 9px; height: 12px; border: 1px solid #666; border-radius: 1px 1px 5px 5px; background: #fff; }
.grip { align-self: flex-end; margin-left: 7px; }
</style>
